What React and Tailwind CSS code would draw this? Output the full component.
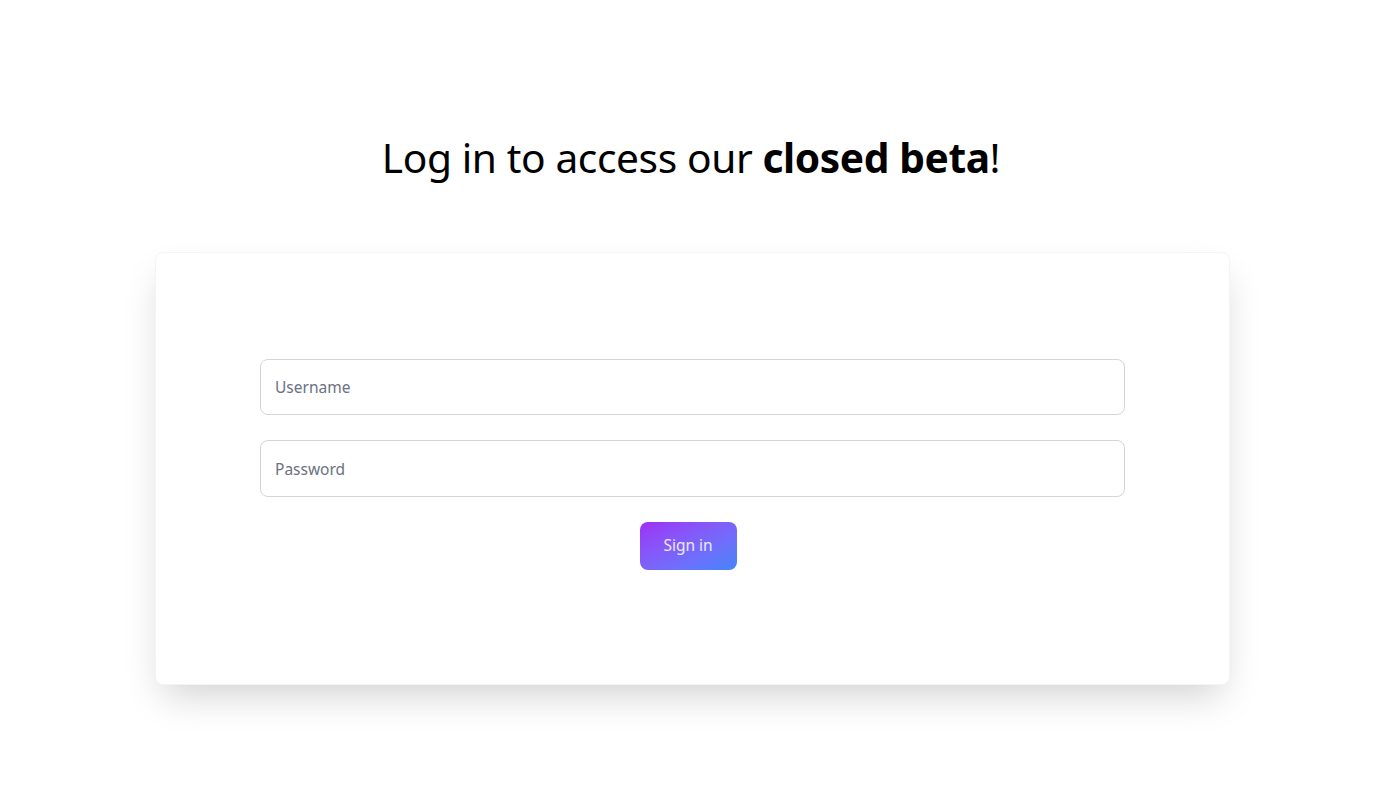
import React, { useState } from "react";

export default function App() {
  const [username, setUsername] = useState("");
  const [password, setPassword] = useState("");

  return (
    <div
      className="min-h-screen bg-white text-black"
      style={{ fontFamily: '"Noto Sans", "Open Sans", sans-serif' }}
    >
      <h1 className="pt-[131px] text-center text-[40.7px] leading-[52px] tracking-[-0.01em]">
        Log in to access our <span className="font-bold">closed beta</span>!
      </h1>

      <div className="ml-[155px] mt-[69px] flex h-[433px] w-[1075px] flex-col items-center rounded-lg border border-gray-100 bg-white pt-[106px] shadow-[0_18px_36px_-8px_rgba(0,0,0,0.18)]">
        <form className="flex w-[865px] flex-col items-center" onSubmit={(e) => e.preventDefault()}>
          <input
            type="text"
            placeholder="Username"
            value={username}
            onChange={(e) => setUsername(e.target.value)}
            className="h-[56px] w-full rounded-lg border border-gray-300 px-[14px] text-[15.5px] text-gray-800 outline-none placeholder:text-gray-500"
          />
          <input
            type="password"
            placeholder="Password"
            value={password}
            onChange={(e) => setPassword(e.target.value)}
            className="mt-[25px] h-[57px] w-full rounded-lg border border-gray-300 px-[14px] text-[15.5px] text-gray-800 outline-none placeholder:text-gray-500"
          />
          <button
            type="submit"
            className="mr-[9px] mt-[25px] h-[48px] w-[97px] rounded-lg bg-gradient-to-br from-[#9b2cf7] to-[#3f86fb] text-[15.5px] text-white/85"
          >
            Sign in
          </button>
        </form>
      </div>
    </div>
  );
}
